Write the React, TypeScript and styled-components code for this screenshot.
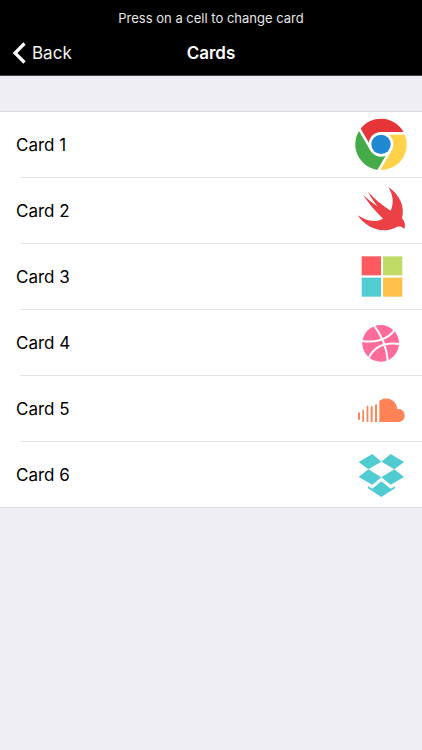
import React from "react";
import styled, { createGlobalStyle } from "styled-components";

const GlobalStyle = createGlobalStyle`
  * { box-sizing: border-box; }
  body {
    margin: 0;
    background: #efeef4;
    font-family: Inter, Roboto, "Liberation Sans", sans-serif;
  }
`;

const Header = styled.header`
  background: #000;
  border-bottom: 1px solid #444347;
  color: #fff;
`;

const Notice = styled.p`
  margin: 0;
  padding-top: 7px;
  font-size: 13px;
  line-height: 22px;
  text-align: center;
  color: #e6e6e6;
`;

const NavBar = styled.nav`
  display: grid;
  grid-template-columns: 1fr auto 1fr;
  align-items: center;
  height: 46px;
  padding: 2px 12px 0;
`;

const BackButton = styled.button`
  display: flex;
  align-items: center;
  gap: 6px;
  justify-self: start;
  padding: 0;
  border: 0;
  background: none;
  color: #f4f4f4;
  font: inherit;
  font-size: 17px;
  line-height: 24px;
  cursor: pointer;
`;

const Title = styled.h1`
  margin: 0;
  font-size: 17px;
  line-height: 24px;
  font-weight: 600;
`;

const CardList = styled.ul`
  margin: 35px 0 0;
  padding: 0;
  list-style: none;
  background: #fff;
  border-top: 1px solid #dddce1;
`;

const CardItem = styled.li`
  &::after {
    content: "";
    display: block;
    height: 1px;
    margin-left: 20px;
    background: #e4e4e6;
  }
  &:last-child::after {
    margin-left: 0;
    background: #dddce1;
  }
`;

const CardButton = styled.button`
  display: flex;
  align-items: center;
  justify-content: space-between;
  width: 100%;
  padding: 0 0 0 16px;
  border: 0;
  background: none;
  color: #000;
  font: inherit;
  font-size: 17px;
  line-height: 24px;
  text-align: left;
  cursor: pointer;
`;

const Picture = styled.svg`
  display: block;
  flex: none;
  width: 77px;
  height: 65px;
`;

const ChromeArt = () => (
  <g transform="translate(108 97)">
    <path fill="#e53539" d="M0 0V-33H69.600A77 77 0 0 0-63.400-43.800L-28.600 16.500Z" />
    <path fill="#ffd24a" d="M0 0V-33H69.600A77 77 0 0 1-6.200 76.800L28.600 16.500Z" />
    <path fill="#45ab48" d="M0 0L28.600 16.500L-6.200 76.800A77 77 0 0 1-63.400-43.800L-28.600 16.500Z" />
    <path
      fill="none"
      stroke="#fff"
      strokeWidth="8"
      d="M0-33H80M28.600 16.500L-11 85M-28.600 16.500L-69-53"
    />
    <circle r="37" fill="#fff" />
    <circle r="29" fill="#1e88d2" />
  </g>
);

const SwiftArt = () => (
  <path
    fill="#eb4146"
    d="M38 112C58 125 88 137 114 122C92 101 70 76 53 49C66 62 82 75 99 86C88 73 78 58 69 41C88 63 112 82 137 98C147 76 145 53 130 27C163 49 181 85 171 121C180 131 182 142 178 153C169 143 162 144 150 149C108 169 62 148 38 112Z"
  />
);

const WindowsArt = () => (
  <>
    <rect x="50" y="37" width="58" height="57" fill="#ff5a5f" />
    <rect x="114" y="37" width="58" height="57" fill="#c1dc66" />
    <rect x="50" y="101" width="58" height="57" fill="#4fcdd3" />
    <rect x="114" y="101" width="58" height="57" fill="#ffc14c" />
  </>
);

const DribbbleArt = () => (
  <>
    <circle cx="107" cy="100" r="55" fill="#ff6b9b" />
    <path
      fill="none"
      stroke="#fff"
      strokeWidth="6"
      d="M85 44C108 72 125 108 129 157M48 92C88 100 128 90 150 58M72 142C90 107 122 96 165 102"
    />
  </>
);

const SoundCloudArt = () => (
  <path
    fill="#ff8356"
    d="M39 111L42 108L45 111V130L42 133L39 130ZM52 103L54 100L57 103V138H52ZM65 92L67 88L70 92V138H65ZM77 92L80 89L83 92V138H77ZM90 87L93 83L96 87V138H90ZM103 74C128 59 155 73 157 100C168 96 179 106 179 119C179 130 170 138 160 138H103Z"
  />
);

const DropboxArt = () => (
  <path
    fill="#4fcbd1"
    d="M41 60L82 36L109 59L70 82ZM109 59L137 36L177 60L148 82ZM41 105L70 82L109 106L82 128ZM109 106L148 82L177 105L137 128ZM69 133L82 140L109 118L137 140L150 133V139L109 165L69 139Z"
  />
);

const cards = [
  { name: "Card 1", Art: ChromeArt },
  { name: "Card 2", Art: SwiftArt },
  { name: "Card 3", Art: WindowsArt },
  { name: "Card 4", Art: DribbbleArt },
  { name: "Card 5", Art: SoundCloudArt },
  { name: "Card 6", Art: DropboxArt },
];

export default function App() {
  return (
    <>
      <GlobalStyle />
      <Header>
        <Notice>Press on a cell to change card</Notice>
        <NavBar>
          <BackButton type="button">
            <svg width="14" height="22" viewBox="0 0 14 22" aria-hidden="true">
              <path d="M12.500 1.500L3 11L12.500 20.500" fill="none" stroke="#fff" strokeWidth="3.200" />
            </svg>
            Back
          </BackButton>
          <Title>Cards</Title>
        </NavBar>
      </Header>
      <main>
        <CardList>
          {cards.map(({ name, Art }) => (
            <CardItem key={name}>
              <CardButton type="button">
                {name}
                <Picture viewBox="0 0 231 195" aria-hidden="true">
                  <Art />
                </Picture>
              </CardButton>
            </CardItem>
          ))}
        </CardList>
      </main>
    </>
  );
}
